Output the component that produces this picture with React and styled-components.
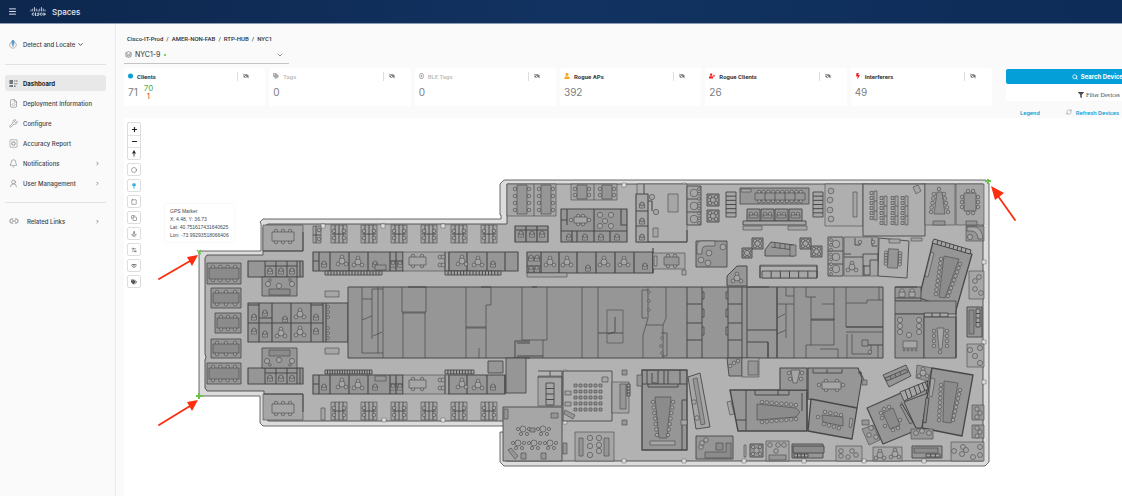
import React from "react";
import styled, { createGlobalStyle } from "styled-components";
import {
  Menu, ChevronDown, ChevronRight, FileCode, Wrench, Bell, UserRound, Link2,
  Search, RefreshCw, Layers, Plus, Minus, Circle, Square, Copy, Anchor, Settings2,
} from "lucide-react";
import { FaEyeSlash, FaTag, FaTags, FaUser, FaUserPlus, FaBolt, FaFilter, FaMapPin, FaWifi } from "react-icons/fa";

const Global = createGlobalStyle`
  *, *::before, *::after { box-sizing: border-box; }
  body { margin: 0; background: #fafafa; color: #3c4045; font-family: Inter, "Liberation Sans", sans-serif; font-size: 6px; overflow-x: hidden; }
  button, select { font: inherit; color: inherit; }
  svg { display: block; flex: none; }
`;

const Page = styled.div`
  display: flex;
  flex-direction: column;
  min-height: 100vh;
`;

const Header = styled.header`
  display: flex;
  align-items: center;
  height: 24px;
  padding: 0 8px;
  color: #e4eaf3;
  background: linear-gradient(90deg, #0d274d, #123261 50%, #0d2c57);
  border-bottom: 1px solid #8b9bb4;
`;

const MenuButton = styled.button`
  display: flex;
  padding: 0;
  border: 0;
  background: none;
`;

const Brand = styled.a`
  display: flex;
  align-items: center;
  gap: 6px;
  margin-left: 13px;
  color: inherit;
  font-size: 8px;
  font-weight: 500;
  line-height: 12px;
  text-decoration: none;
`;

const Body = styled.div`
  display: flex;
  flex: 1;
`;

const Sidebar = styled.aside`
  flex: none;
  width: 116px;
  padding: 12px 9px 0 5px;
  border-right: 1px solid #e9e9e9;
`;

const Product = styled.button`
  display: flex;
  align-items: center;
  gap: 2px;
  width: 100%;
  height: 16px;
  padding: 0 4px;
  border: 0;
  background: none;
  font-weight: 500;
  span { padding-left: 4px; }
`;

const Rule = styled.hr`
  margin: ${(p) => (p.$after ? "11px 0 10px" : "12px 0 10px")};
  border: 0;
  border-top: 1px solid #e2e2e2;
`;

const NavList = styled.nav`
  display: flex;
  flex-direction: column;
  gap: 4px;
`;

const NavItem = styled.a`
  display: flex;
  align-items: center;
  gap: ${(p) => (p.$wide ? "8px" : "5px")};
  height: 16px;
  padding: 0 6px 0 4px;
  border-radius: 3px;
  background: ${(p) => (p.$active ? "#e8e8e8" : "transparent")};
  color: ${(p) => (p.$active ? "#1c1e21" : "#3c4045")};
  font-weight: ${(p) => (p.$active ? 700 : 500)};
  white-space: nowrap;
  text-decoration: none;
  & > svg { color: #70767e; }
  & > span { flex: 1; }
`;

const Main = styled.main`
  display: flex;
  flex-direction: column;
  flex: 1;
  min-width: 0;
  padding: 10px 0 0 8px;
  overflow: hidden;
`;

const Crumbs = styled.nav`
  display: flex;
  gap: 3px;
  padding-left: 3px;
  font-family: Roboto, sans-serif;
  font-weight: 500;
  line-height: 10px;
  a { color: #2b2e33; text-decoration: none; }
`;

const Floor = styled.label`
  display: flex;
  align-items: center;
  gap: 3px;
  width: 165px;
  height: 18px;
  margin-top: 2px;
  padding: 0 5px 0 1px;
  border-bottom: 1px solid #c4c4c4;
  font-size: 7px;
  color: #555a60;
`;

const FloorSelect = styled.select`
  appearance: none;
  width: 26px;
  padding: 0;
  border: 0;
  outline: 0;
  background: none;
  color: #2b2e33;
`;

const Online = styled.i`
  width: 2px;
  height: 2px;
  margin-right: auto;
  border-radius: 50%;
  background: #5cb836;
`;

const Toolbar = styled.div`
  display: grid;
  grid-template-columns: minmax(0, 1fr) 186px;
  gap: 14px;
  height: 50px;
  margin: 4px -70px 0 0;
`;

const Cards = styled.div`
  display: grid;
  grid-template-columns: repeat(6, minmax(0, 1fr));
  gap: 4px;
  height: 38px;
`;

const Card = styled.section`
  padding: 2px 4px;
  border-radius: 2px;
  background: #fff;
`;

const CardHead = styled.div`
  display: flex;
  align-items: center;
  gap: 4px;
  height: 12px;
  padding-right: 12px;
  h2 {
    flex: 1;
    margin: 0;
    color: ${(p) => (p.$muted ? "#b8b8b8" : "#34383d")};
    font-family: Roboto, sans-serif;
    font-size: 6px;
    font-weight: ${(p) => (p.$muted ? 500 : 700)};
  }
  & > svg { width: auto; height: 6px; color: ${(p) => p.$color}; }
`;

const HideButton = styled.button`
  display: flex;
  align-items: center;
  height: 9px;
  padding: 0 0 0 5px;
  border: 0;
  border-left: 1px solid #dedede;
  background: none;
  color: #54585d;
`;

const Count = styled.div`
  display: flex;
  align-items: center;
  gap: 6px;
  height: 19px;
  color: #7b7e82;
  font-size: 10px;
`;

const Split = styled.div`
  display: flex;
  flex-direction: column;
  align-items: center;
  font-size: 8px;
  line-height: 8px;
  color: #4caf50;
  em { color: #d8401f; font-style: normal; }
`;

const Actions = styled.div`
  display: flex;
  flex-direction: column;
  padding-top: 1px;
`;

const SearchButton = styled.button`
  display: flex;
  align-items: center;
  justify-content: center;
  gap: 3px;
  height: 15px;
  padding: 0;
  border: 0;
  border-radius: 2px;
  background: #049fd9;
  color: #fff;
  font-weight: 700;
`;

const FilterButton = styled.button`
  display: flex;
  align-items: center;
  justify-content: center;
  gap: 2px;
  height: 17px;
  padding: 4px 0 0;
  border: 0;
  background: #fff;
  color: #44484c;
  font-family: "Liberation Serif", serif;
`;

const ActionLinks = styled.div`
  display: flex;
  align-items: center;
  gap: 26px;
  height: 17px;
  padding: 6px 0 0 14px;
  color: #049fd9;
  font-family: Roboto, sans-serif;
  font-weight: 500;
  a { display: flex; gap: 4px; color: inherit; text-decoration: none; }
  svg { color: #8d9196; }
`;

const MapPanel = styled.section`
  position: relative;
  flex: 1;
  background: #fff;
`;

const Plan = styled.svg`
  width: 100%;
  height: auto;
  stroke-linejoin: round;
`;

const Controls = styled.div`
  position: absolute;
  top: 4px;
  left: 3px;
  display: flex;
  flex-direction: column;
  gap: 3px;
`;

const ControlGroup = styled.div`
  display: flex;
  flex-direction: column;
  border: 1px solid #dddddd;
  border-radius: 2px;
  background: #fff;
`;

const Control = styled.button`
  display: flex;
  align-items: center;
  justify-content: center;
  width: 12px;
  height: ${(p) => (p.$zoom ? "12px" : "11px")};
  padding: 0;
  border: 0;
  background: none;
  color: ${(p) => (p.$active ? "#1ba4dc" : p.$zoom ? "#1f1f1f" : "#555555")};
  & + & { border-top: 1px solid #e2e2e2; }
`;

const GpsTip = styled.div`
  position: absolute;
  top: 86px;
  left: 41px;
  padding: 3px 5px;
  background: #fff;
  box-shadow: 0 0 2px rgba(0, 0, 0, 0.08);
  color: #45484c;
  font-family: "Liberation Sans", sans-serif;
  font-size: 5px;
  line-height: 8px;
  white-space: nowrap;
`;

/* Floor tones */
const ROOM = "#a6a6a6";
const DARK = "#969696";
const DESK = "#8b8b8b";
const LINE = "#484848";

const Box = ({ b, f = ROOM, w = 0.6 }) => (
  <rect x={b[0]} y={b[1]} width={b[2] - b[0]} height={b[3] - b[1]} fill={f} strokeWidth={w} />
);
const Poly = ({ p, f = ROOM, w = 0.6 }) => <polygon points={p} fill={f} strokeWidth={w} />;
const Lines = ({ d, w = 0.7 }) => <path d={d} fill="none" strokeWidth={w} />;
const Dots = ({ p, r = 1.8, f = ROOM }) =>
  p.map(([x, y], i) => <circle key={i} cx={x} cy={y} r={r} fill={f} />);

const between = (a, b, n) =>
  Array.from({ length: n }, (_, i) => {
    const t = n === 1 ? 0.5 : i / (n - 1);
    return [a[0] + (b[0] - a[0]) * t, a[1] + (b[1] - a[1]) * t];
  });

const WideTable = ({ x, y, w, h, n, f = ROOM }) => (
  <g>
    <Dots p={between([x + 4, y - 1], [x + w - 4, y - 1], n)} />
    <Dots p={between([x + 4, y + h + 1], [x + w - 4, y + h + 1], n)} />
    <Box b={[x, y, x + w, y + h]} f={f} />
  </g>
);
const TallTable = ({ x, y, w, h, n }) => (
  <g>
    <Dots p={between([x - 2, y + 4], [x - 2, y + h - 4], n)} />
    <Dots p={between([x + w + 2, y + 4], [x + w + 2, y + h - 4], n)} />
    <Box b={[x, y, x + w, y + h]} f={DARK} />
  </g>
);
const Pod = ({ x, y }) => (
  <g>
    <Box b={[x, y, x + 16, y + 18]} />
    <Lines w={0.9} d={`M${x + 8} ${y}v18M${x + 1} ${y + 9}h14M${x + 4} ${y}v18M${x + 12} ${y}v18`} />
    <Dots p={[[x + 3, y + 6], [x + 3, y + 13], [x + 13, y + 6], [x + 13, y + 13]]} />
  </g>
);
const Quad = ({ x, y, s = 12 }) => (
  <g>
    <Box b={[x, y, x + s, y + s]} f={DARK} w={0.9} />
    <Dots r={1.7} p={[[x + 3, y + 3], [x + s - 3, y + 3], [x + 3, y + s - 3], [x + s - 3, y + s - 3]]} />
    <circle cx={x + s / 2} cy={y + s / 2} r="2.6" fill={ROOM} />
  </g>
);
const Trio = ({ x, y }) => (
  <g>
    <Dots p={[[x, y - 4], [x - 4, y + 3], [x + 4, y + 3]]} r={1.9} />
    <circle cx={x} cy={y} r="3" fill={ROOM} />
  </g>
);
const Steps = ({ x, y, w, h, n, vertical }) => (
  <g>
    <Box b={[x, y, x + w, y + h]} w={0.9} />
    <Lines
      w={1}
      d={Array.from({ length: n - 1 }, (_, i) =>
        vertical ? `M${x} ${y + ((i + 1) * h) / n}h${w}` : `M${x + ((i + 1) * w) / n} ${y}v${h}`
      ).join("")}
    />
  </g>
);
const Seated = ({ x, y }) => (
  <g>
    <rect x={x - 2.5} y={y} width="5" height="4" fill={ROOM} />
    <circle cx={x} cy={y} r="2" fill={DARK} />
  </g>
);

const WestWing = () => (
  <g>
    {/* meeting tables on the west wall */}
    {[[207, 263, 241, 284, 4], [211, 288, 241, 308, 3], [215, 313, 241, 333, 3], [211, 339, 241, 358, 3], [207, 363, 241, 384, 4]].map(([a, b, c, d, n]) => (
      <g key={b}>
        <Box b={[a, b, c, d]} f={DARK} w={0.8} />
        <WideTable x={a + 2} y={b + 5} w={c - a - 4} h={d - b - 10} n={n} f={DESK} />
      </g>
    ))}
    {/* corner conference rooms */}
    <Box b={[263, 225, 303, 251]} />
    <WideTable x={272} y={232} w={22} h={9} n={3} />
    <Box b={[263, 394, 303, 420]} />
    <WideTable x={272} y={404} w={22} h={9} n={3} />
    <Lines w={1} d="M303 232v19M263 251h40M264 394h39v18" />
    {/* booth rows */}
    {[261, 368].map((y) => (
      <g key={y}>
        <Box b={[248, y, 303, y + 16]} f={DARK} w={1.1} />
        <Lines w={1} d={`M265 ${y}v16M276 ${y}v16M287 ${y}v16M297 ${y}v16M300 ${y}v16M265 ${y + 5}h32`} />
        {[270, 281, 292].map((x) => <Seated key={x} x={x} y={y + 9} />)}
      </g>
    ))}
    <Box b={[262, 277, 297, 296]} f={DARK} w={0.8} />
    <Box b={[269, 289, 290, 295]} f={DESK} />
    <Dots p={[[268, 284], [279, 286], [292, 284]]} r={2.6} />
    <Dots p={[[270, 280], [290, 280]]} r={1.3} />
    <Box b={[262, 348, 297, 368]} f={DARK} w={0.8} />
    <Box b={[269, 350, 290, 356]} f={DESK} />
    <Dots p={[[267, 361], [279, 360], [292, 361]]} r={2.6} />
    <Dots p={[[270, 365], [290, 365]]} r={1.3} />
    {/* offices beside the core */}
    <Box b={[248, 303, 348, 342]} f={DARK} w={1.1} />
    <Lines w={1.1} d="M248 323h75M259 303v39M272 303v39M291 303v39M311 303v39M323 303v39M326 303v39M248 305h11M259 318h13M311 305h12" />
    {[[254, 316], [265, 312], [316, 316], [254, 330], [265, 333], [316, 330], [285, 318]].map(([x, y]) => <Seated key={`${x}-${y}`} x={x} y={y} />)}
    <Trio x={281} y={333} />
    <Trio x={300} y={314} />
    <Trio x={300} y={332} />
    <Dots p={[[328, 307], [328, 312], [328, 317], [328, 328], [328, 333], [328, 338]]} r={1.5} />
    <Box b={[325, 291, 339, 297]} />
    <Box b={[325, 348, 339, 354]} />
  </g>
);

const OfficeRow = ({ y, flip }) => {
  const t = flip ? y + 5 : y;
  const s = flip ? y : y + 19;
  return (
    <g>
      <Box b={[313, t, 403, t + 19]} f={DARK} w={1.1} />
      <Box b={[403, t, 449, t + 19]} />
      <Box b={[449, t, 518 - (flip ? 13 : 0), t + 19]} f={DARK} w={1.1} />
      <Lines w={1.1} d={`M319 ${t}v19M330 ${t}v19M349 ${t}v19M368 ${t}v19M390 ${t}v19M396 ${t}v19M445 ${t}v19M467 ${t}v19M487 ${t}v19M505 ${t}v19M313 ${t + 9}h6M390 ${t + 9}h13`} />
      <Steps x={325} y={s} w={flip ? 47 : 57} h={4} n={19} />
      <Steps x={445} y={s} w={flip ? 29 : 56} h={4} n={flip ? 10 : 18} />
      <WideTable x={409} y={t + 5} w={17} h={8} n={2} />
      {[324, 375, 393, 400, 493].map((x) => <Seated key={x} x={x} y={t + 11} />)}
      <Trio x={342} y={t + 9} />
      <Trio x={358} y={t + 10} />
      <Trio x={462} y={t + 9} />
      <Trio x={478} y={t + 10} />
      <Dots p={[[440, t + 5], [440, t + 13], [443, t + 5], [443, t + 13]]} r={2} />
      <Box b={[375, flip ? t + 1 : t + 13, 386, flip ? t + 6 : t + 18]} f={DARK} />
    </g>
  );
};

const Core = () => (
  <g>
    <Box b={[348, 287, 883, 358]} f={DARK} w={1} />
    <Lines d="M362 287v12h10v-10h11M362 299v54h21M372 299v40M378 287v66M383 287v71M362 320l10-4M373 336l9-4M402 287v25h24v-25M402 313h24M403 313v45M425 313v45M466 287v71M486 358v-53h5v-18M466 327h20M466 328h20M479 348v10M522 287v53h21v18M543 340h4v-53M582 287v71M598 287v71" />
    <Lines w={1} d="M515 341h15M515 341v17h15M517 343h13M517 356h26M491 287h-10M408 287h18M532 287h5" />
    <Lines d="M648 287v31l-2 7-3 10v23M666 287v31l-3 7v33M646 325h17M642 290h6M642 290v28h5M661 333h6v23h-5" />
    <Box b={[607, 310, 623, 343]} f={DARK} />
    <Lines w={0.9} d="M598 333h25M615 317v15l-7 2" />
    <Dots p={[[649, 292], [649, 301], [649, 310], [662, 338], [661, 346], [662, 353]]} r={1.3} />
    <Lines w={1} d="M687 287v71M702 287v71M687 304h15M687 323h15M687 340h15M728 287v71M742 287v71M728 304h14M728 323h14M728 340h14M747 287v71M747 330h30M747 342h21v16M768 342v16M747 287h22" />
    <Lines w={0.8} d="M702 292h2v7h-2M702 309h2v8h-2M702 327h2v8h-2M728 292h-2v7h2M728 309h-2v8h2M728 327h-2v8h2" />
    <Lines w={1.4} d="M777 287v71" />
    <Lines d="M777 304h17M786 304v34M777 318l8-4M777 334l9-4M794 287v71M786 287v9h8M806 287v10h10M811 297v22M811 319h24M811 345v-26M834 287v58M822 304h12M820 349h18v9M806 345v13M806 345h28M846 287v40h37M846 332h37M847 334v24M852 334v20h19v-9M862 340h6v6h-6zM878 345v13M862 303h5v-3h16M879 287v13M846 303h16" />
    <Lines w={1} d="M846 327h37M868 345h15M811 320h23" />
    <Dots p={[[870, 352]]} />
    {/* rooms hanging off the core */}
    <Box b={[506, 358, 526, 393]} f={DARK} w={0.9} />
    <Box b={[488, 361, 503, 373]} f={DARK} w={0.9} />
    <Poly p="727,358 742,358 742,376 729,376" f={DARK} w={0.9} />
    <Box b={[742, 358, 759, 377]} />
    <Box b={[748, 361, 758, 375]} f={DARK} />
    <Dots p={[[734, 363], [730, 366], [738, 361]]} />
    <Poly p="727,286 727,276 737,266 747,266 747,286" f={DARK} w={1} />
    <Trio x={737} y={278} />
  </g>
);

const NorthEast = () => (
  <g>
    <Box b={[507, 184, 556, 216]} />
    <Lines d="M534 184v32" />
    <TallTable x={517} y={185} w={10} h={29} n={4} />
    <TallTable x={541} y={185} w={10} h={29} n={4} />
    <Box b={[571, 184, 617, 200]} />
    <Lines d="M594 184v16" />
    <TallTable x={577} y={185} w={10} h={14} n={2} />
    <TallTable x={602} y={185} w={10} h={14} n={2} />
    <Box b={[515, 226, 548, 242]} f={DARK} w={1.2} />
    <Lines w={1.2} d="M526 226v16M537 226v16M516 230h31" />
    {[521, 532, 542].map((x) => <Seated key={x} x={x} y={233} />)}
    <Box b={[561, 209, 627, 242]} f={DARK} w={1.1} />
    <Lines w={1.1} d="M561 231h66M572 231v11M577 231v11M594 209v33M610 231v11M567 209v16M561 220h6M621 209v16h6" />
    <WideTable x={574} y={217} w={13} h={6} n={2} />
    <Dots p={[[571, 220], [589, 220]]} />
    <Dots p={[[600, 215], [611, 215], [605, 221], [600, 226], [611, 226]]} r={2.6} />
    {[569, 585, 601, 617].map((x) => <Seated key={x} x={x} y={236} />)}
    <Box b={[637, 184, 687, 242]} f="#b0b0b0" />
    <Lines w={1} d="M648 242h39v-12M644 184v10" />
    <Box b={[636, 194, 648, 242]} w={1.1} />
    <Lines w={1.1} d="M636 211h12M636 226h12M648 201h4v10" />
    {[204, 220, 236].map((y) => <Seated key={y} x={642} y={y} />)}
    <Box b={[668, 194, 678, 212]} />
    <Box b={[653, 228, 658, 237]} />
    <Dots p={[[652, 197], [656, 212]]} r={2.7} />
    <Box b={[687, 186, 701, 225]} w={0.9} />
    <Lines w={0.9} d="M687 199h14M687 212h14" />
    <Dots p={[[694, 193], [694, 206], [694, 219]]} r={3.8} />
    <Dots p={between([699, 189], [699, 223], 8)} r={1.5} />
    <Quad x={707} y={194} />
    <Quad x={707} y={210} />
    <Steps x={726} y={192} w={10} h={25} n={6} vertical />
    <Steps x={813} y={192} w={10} h={25} n={6} vertical />
    <Box b={[740, 188, 809, 204]} f={DARK} w={0.8} />
    <Box b={[741, 189, 751, 192]} />
    <WideTable x={755} y={193} w={50} h={7} n={10} f={DARK} />
    <Lines d="M765 193v7M775 193v7M785 193v7M795 193v7" />
    {[747, 761, 775, 789].map((x) => (
      <g key={x}>
        <Box b={[x, 209, x + 13, 221]} f={DARK} w={0.9} />
        <Dots p={[[x + 4, 214], [x + 9, 214]]} />
        <Box b={[x + 2, 215, x + 11, 218]} f={DARK} />
      </g>
    ))}
    <Box b={[743, 221, 806, 225]} w={0.9} />
    <Box b={[743, 226, 762, 230]} />
    <Box b={[788, 226, 807, 230]} />
    <Box b={[696, 241, 727, 267]} f={DARK} w={0.9} />
    <path d="M697 254v-8q0-5 5-5h13v5h-9q-4 0-4 4v4z" fill={ROOM} />
    <Dots p={[[709, 253], [701, 260], [708, 263], [723, 247]]} r={2.9} />
    <Quad x={752} y={238} s={11} />
    <Quad x={742} y={248} s={10} />
    <Quad x={800} y={238} s={11} />
    <Quad x={811} y={246} s={11} />
    <Poly p="765,250 771,242 794,245 794,256 765,256" f={DARK} w={0.9} />
    <Lines d="M771 247l23 3M775 243v5M780 244v5M785 244v5M790 245v5" />
    <Box b={[790, 245, 796, 256]} f={DARK} />
    <Box b={[760, 265, 817, 278]} w={0.5} f="#b0b0b0" />
    <Steps x={762} y={271} w={55} h={7} n={6} />
    <Lines w={1.2} d="M760 278v-12h57v12" />
    {/* offices north of the core */}
    <Box b={[527, 252, 653, 273]} f={DARK} w={1.1} />
    <Lines w={1.2} d="M541 252v21M559 252v21M577 252v21M596 252v21M615 252v21M634 252v21M653 248v25M527 266h14" />
    <Box b={[527, 273, 567, 277]} />
    <Trio x={550} y={262} />
    <Trio x={567} y={262} />
    <Trio x={604} y={262} />
    <Trio x={624} y={262} />
    {[[531, 257], [537, 257], [531, 268], [537, 268], [588, 267], [645, 265]].map(([x, y]) => <Seated key={`${x}-${y}`} x={x} y={y} />)}
    <Box b={[653, 253, 685, 269]} />
    <WideTable x={664} y={257} w={15} h={8} n={2} f={DARK} />
    <Box b={[654, 256, 657, 266]} />
    <Box b={[682, 270, 686, 275]} />
    {/* open rooms along the north wall */}
    <Box b={[825, 184, 863, 226]} f="#afafaf" />
    <Dots p={[[831, 191], [830, 200], [830, 210], [831, 219]]} r={2.9} />
    <Box b={[853, 192, 857, 217]} />
    <Poly p="863,184 925,184 925,236 863,236" f="#afafaf" w={0.9} />
    {[[874, 191, 220], [884, 196, 225], [895, 196, 225], [905, 196, 225]].map(([x, a, b]) => (
      <g key={x}>
        <Box b={[x, a, x + 3, b]} />
        <Lines d={`M${x} ${a + 10}h3M${x} ${a + 20}h3`} />
        {between([x - 3, a + 2], [x - 3, b - 2], 6).map(([cx, cy], i) => <rect key={i} x={cx - 1} y={cy - 1.5} width="3" height="3" fill={ROOM} />)}
      </g>
    ))}
    <Poly p="913,187 918,185 921,191 916,194" />
    <Box b={[925, 184, 955, 225]} />
    <Poly p="937,192 942,192 945,214 934,214" f={DARK} />
    <Dots p={[...between([934, 194], [931, 212], 5), ...between([944, 194], [948, 212], 5), [939, 189]]} />
    <Box b={[956, 184, 984, 225]} />
    <TallTable x={964} y={193} w={12} h={18} n={3} />
    <Dots p={[[968, 191], [973, 191], [968, 213], [973, 213]]} />
    <Box b={[933, 221, 945, 225]} f={DARK} />
    <Box b={[966, 221, 977, 225]} f={DARK} />
    <Box b={[966, 226, 984, 241]} f={DARK} />
    <path d="M967 227h9q6 2 7 12h-5q0-7-6-8h-5z" fill={ROOM} />
    <Dots p={[[970, 237]]} r={2.6} />
    <Box b={[828, 237, 843, 276]} w={0.9} />
    <Lines w={0.9} d="M828 251h15M828 264h15" />
    <Dots p={[[836, 244], [836, 257], [836, 269]]} r={3.8} />
    <Dots p={between([831, 240], [831, 274], 8)} r={1.5} />
    <Box b={[844, 237, 878, 276]} />
    <Lines w={0.9} d="M844 257h19v19M844 254h7M863 257v-3h15v6M863 266h7v-6h8M855 238v7h5v-4M872 238v8h5M864 265v10h6v-9" />
    <Trio x={852} y={267} />
    <Dots p={[[860, 242], [873, 242]]} />
    <Poly p="879,238 909,241 907,278 878,276" f="#afafaf" w={0.9} />
    <g transform="rotate(3 893 258)"><TallTable x={888} y={249} w={10} h={19} n={5} /></g>
    <Box b={[889, 239, 900, 243]} />
    <Box b={[911, 238, 922, 241]} />
    <Poly p="933,242 972,254 956,310 919,298" f={DARK} w={1.3} />
    <Poly p="934,239 971,250 970,254 932,243" w={1} />
    <Lines w={1} d="M938 240l-1 4M942 241l-1 4M946 243l-1 4M950 244l-1 4M954 245l-1 4M958 246l-1 4M962 247l-1 4M966 249l-1 4" />
    <Poly p="944,256 959,259 945,298 939,297" f={DESK} />
    <Dots p={[...between([941, 259], [936, 294], 9), ...between([960, 264], [948, 296], 9)]} />
    <Poly p="931,252 934,253 928,277 925,276" />
    <Box b={[969, 271, 984, 299]} />
    <Dots p={[[979, 277], [975, 281], [981, 293], [975, 289]]} r={2.4} />
    <Box b={[967, 307, 982, 337]} f={DARK} w={0.9} />
    <Box b={[969, 310, 974, 334]} f={DESK} />
    <Steps x={976} y={309} w={4} h={18} n={4} vertical />
    {/* rooms east of the core */}
    <Box b={[895, 287, 921, 301]} f={DARK} w={0.9} />
    <Lines w={1.1} d="M895 298h26M895 287h22" />
    <Dots p={[[902, 291], [912, 291]]} r={2.2} />
    <Box b={[899, 292, 905, 297]} />
    <Box b={[909, 292, 915, 297]} />
    <Box b={[895, 301, 956, 314]} f={DARK} w={0.8} />
    <Steps x={924} y={313} w={24} h={4} n={3} />
    <Box b={[895, 314, 924, 358]} f={DARK} w={0.9} />
    <Box b={[924, 317, 956, 358]} f={DARK} w={0.9} />
    <Dots p={[[900, 320], [900, 326], [900, 332], [919, 320], [919, 326], [919, 332], [909, 335]]} r={2.6} />
    <Box b={[903, 341, 917, 348]} />
    <Dots p={[[904, 350], [908, 350], [912, 350], [916, 350]]} r={1} />
    <Poly p="937,328 944,328 942,349 939,349" f={ROOM} />
    <Dots p={[...between([934, 331], [934, 346], 4), ...between([947, 331], [947, 346], 4), [940, 352]]} />
    <Lines w={1.2} d="M956 310v48" />
  </g>
);

const SouthEast = () => (
  <g>
    <Box b={[538, 376, 562, 406]} />
    <Lines w={0.9} d="M538 371h24v35M550 371v5M538 377h24" />
    <Steps x={546} y={383} w={8} h={22} n={4} vertical />
    <Box b={[563, 371, 612, 421]} w={0.9} f="#b0b0b0" />
    {Array.from({ length: 30 }, (_, i) => (
      <rect key={i} x={574 + (i % 6) * 5} y={384 + Math.floor(i / 6) * 6} width="3" height="3" fill={DARK} />
    ))}
    <Box b={[565, 391, 571, 395]} />
    <Box b={[565, 402, 571, 406]} />
    <Box b={[602, 377, 608, 382]} />
    <Poly p="565,410 575,415 573,419 564,414" f={DARK} />
    <Box b={[612, 382, 629, 413]} />
    <Box b={[620, 384, 626, 409]} f={DARK} />
    <Steps x={627} y={384} w={3} h={12} n={4} vertical />
    <Box b={[622, 370, 627, 375]} f={DARK} />
    <Box b={[622, 420, 627, 425]} f={DARK} />
    <Box b={[503, 407, 562, 461]} w={0.9} />
    <Box b={[504, 409, 508, 419]} f={DARK} />
    <Box b={[551, 413, 558, 418]} f={DARK} />
    {[[523, 429], [543, 429], [518, 443], [534, 443], [550, 443]].map(([x, y]) => (
      <g key={`${x}-${y}`}>
        <Dots p={[[x - 5, y], [x + 6, y], [x - 2, y + 5], [x + 4, y + 5]]} r={1.6} />
        <circle cx={x} cy={y} r="3" fill={ROOM} />
      </g>
    ))}
    <Poly p="508,450 511,448 518,456 515,459" f={DARK} />
    <Box b={[521, 453, 526, 459]} f={DARK} />
    <Box b={[541, 453, 546, 459]} f={DARK} />
    <Box b={[530, 428, 535, 432]} f={DARK} />
    <Box b={[575, 432, 614, 461]} />
    <Box b={[579, 438, 583, 456]} f={DARK} />
    <Box b={[604, 438, 609, 456]} f={DARK} />
    <Dots p={[[590, 438], [599, 438], [599, 445], [599, 451], [590, 455], [590, 446]]} r={2.7} />
    <Box b={[563, 443, 567, 454]} f={DARK} />
    <Box b={[642, 370, 687, 450]} f={DARK} w={1.4} />
    <Lines w={1} d="M642 384h45M648 384v3h30v-3M658 371v13M664 371v13M668 371v13M657 383h-5v-10M682 400h5M682 400v20M682 425v25M647 370v14M680 370v14" />
    <Poly p="655,397 671,397 667,438 659,438" f={DESK} />
    <Dots p={[...between([653, 402], [657, 435], 7), ...between([673, 402], [668, 435], 7)]} />
    <Box b={[650, 441, 675, 445]} />
    <Box b={[681, 420, 687, 425]} />
    <Box b={[637, 375, 642, 386]} f={DARK} />
    <Poly p="688,377 700,373 710,427 696,429" w={0.9} />
    <Poly p="693,379 697,378 705,424 701,425" f={DARK} />
    <Dots p={[[694, 402], [697, 418]]} r={2.3} />
    <Box b={[696, 436, 733, 459]} f={DARK} w={0.9} />
    <Poly p="705,452 726,452 726,443 731,443 731,458 705,458" f={DESK} />
    <Box b={[716, 443, 723, 450]} f={DESK} />
    <Dots p={[[701, 447], [706, 440], [702, 443]]} r={2.3} />
    <Box b={[744, 445, 746, 457]} />
    <Quad x={750} y={444} s={13} />
    <Box b={[766, 441, 789, 461]} />
    <Box b={[769, 455, 786, 460]} f={DARK} />
    <Dots p={[[770, 445], [784, 445], [776, 451], [778, 445]]} r={2.3} />
    <Poly p="730,390 807,390 807,431 738,431" f={DARK} w={1.4} />
    <Lines w={1} d="M746 390v41M736 420h10M755 390v5h34v-5M778 390v5M802 393v18M807 392v38" />
    <Poly p="757,404 796,408 800,412 796,417 757,420" f={DESK} />
    <Dots p={[...between([762, 402], [796, 405], 8), ...between([762, 422], [796, 419], 8)]} />
    <Poly p="727,402 731,401 734,414 730,415" />
    <Box b={[780, 368, 807, 390]} f={DARK} w={1.1} />
    <Poly p="791,370 800,370 797,383 793,383" f={ROOM} />
    <Dots p={[[789, 373], [790, 379], [802, 373], [801, 379]]} />
    <Poly p="808,368 858,368 862,378 857,408 808,399" f={DARK} w={1.1} />
    <Lines w={0.9} d="M813 369v4h29v-4M827 369v4M860 371l4 9M858 373h4" />
    <WideTable x={822} y={382} w={19} h={7} n={2} />
    <Dots p={[[819, 385], [843, 385]]} />
    <Poly p="811,399 857,408 852,439 808,431" f={DARK} w={1.3} />
    <Poly p="822,415 843,417 843,426 823,422" f={DESK} />
    <Dots p={[...between([825, 412], [841, 415], 4), ...between([824, 424], [839, 428], 4), [818, 417]]} />
    <Box b={[862, 380, 867, 385]} f={DARK} />
    <Poly p="850,418 853,419 851,428 849,427" />
    <Poly p="883,375 906,365 911,376 889,387" f={DARK} w={0.9} />
    <Poly p="885,378 906,369 908,372 887,381" f={DESK} w={0.8} />
    <Lines d="M890 376l1 3M895 374l1 3M900 372l1 3" />
    <Poly p="917,365 932,368 928,381 916,378" f={DARK} />
    <Trio x={923} y={373} />
    <Poly p="867,408 928,381 922,428 883,444" f={DARK} w={1.2} />
    <Poly p="900,392 925,382 928,389 904,401" w={0.9} />
    <Lines w={1} d="M905 390l3 9M909 388l3 9M914 386l3 9M918 384l3 9M922 383l3 8" />
    <Poly p="904,402 928,393 922,428 916,428" f={DARK} w={1} />
    <Lines w={0.8} d="M901 402l15 26M900 405l2-1 11 18-3 2z" />
    <Poly p="883,413 893,408 900,425 890,429" f={DESK} />
    <Dots p={[[884, 409], [889, 407], [881, 413], [882, 418], [885, 426], [893, 430], [898, 428], [900, 420]]} />
    <Poly p="932,368 973,375 962,436 922,428" f={DARK} w={1.4} />
    <Poly p="944,381 958,383 951,423 943,422" f={DESK} />
    <Dots p={[...between([941, 385], [939, 420], 9), ...between([960, 390], [953, 420], 8)]} />
    <Poly p="931,378 935,379 932,397 929,396" />
    <Poly p="926,398 929,398 926,423 923,422" f={DESK} w={0.9} />
    <Box b={[862, 420, 869, 425]} f={DARK} />
    <Poly p="862,429 873,425 880,440 869,445" f={DARK} />
    <Dots p={[[871, 428], [869, 435], [876, 437]]} r={2.3} />
    <Box b={[911, 429, 933, 439]} f={DARK} />
    <Dots p={[[916, 433], [929, 433], [922, 431]]} r={2.4} />
    <Box b={[792, 444, 823, 458]} f={DARK} w={0.9} />
    <Box b={[793, 446, 824, 453]} f={DESK} w={0.9} />
    <Steps x={794} y={454} w={14} h={3} n={4} />
    <Box b={[836, 446, 862, 461]} />
    <Dots p={[[841, 451], [841, 456], [848, 457], [856, 455], [852, 451]]} r={2.3} />
    <Box b={[873, 447, 902, 461]} />
    <Trio x={880} y={455} />
    <Trio x={895} y={454} />
    <Box b={[912, 446, 942, 458]} f={DARK} w={0.9} />
    <Box b={[914, 448, 938, 453]} f={DESK} />
    <Steps x={926} y={454} w={14} h={3} n={3} />
    <Box b={[951, 442, 984, 461]} />
    <Dots p={[[954, 451], [963, 447], [962, 454], [966, 450], [980, 447], [980, 455], [973, 457]]} r={2.5} />
    <Box b={[967, 344, 984, 367]} />
    <Dots p={[[970, 350], [975, 356], [980, 348], [980, 363]]} r={2.6} />
    <Box b={[972, 405, 984, 420]} f={DARK} />
    <Dots p={[[980, 413], [977, 409], [977, 417]]} r={2.2} />
    <Box b={[972, 425, 984, 438]} f={DARK} />
    <Dots p={[[980, 432], [977, 428], [977, 436]]} r={2.2} />
  </g>
);

const FloorPlan = () => (
  <Plan viewBox="124 118 998 378" role="img" aria-label="Floor plan of NYC1-9">
    <g stroke={LINE} strokeWidth="0.6">
      <path
        fill="#dcdcdc" strokeWidth="0.8"
        d="M199 251h62v-27l-1-2 3-3h238v-4h-1v-31l4-4h482l3 3v279l-4 4H504l-4-4v-30h5v-6H263l-3-3v-27h-61z"
      />
      <path
        fill="#b2b2b2" strokeWidth="0.9"
        d="M207 255h56v-28l5-3h239v-40h476v277H506v-28h2v-12H268l-4-5v-25h-57l-2-3v-28l1-3-1-3v-96z"
      />
      <g fill="#dedede" strokeWidth="0.4">
        {[[321, 224], [381, 224], [441, 224], [382, 418], [441, 418], [622, 183], [682, 183], [682, 218], [862, 184], [862, 219], [922, 184], [922, 219], [563, 370], [563, 420], [622, 459], [682, 459], [742, 459], [802, 459], [862, 459], [922, 459], [982, 260], [982, 340], [982, 380]].map(([x, y]) => (
          <rect key={`${x}-${y}`} x={x} y={y} width="4" height="4" />
        ))}
      </g>
      <WestWing />
      <Box b={[313, 226, 321, 243]} />
      <Dots p={[[319, 230], [319, 239]]} />
      <Lines w={0.9} d="M316 226v17M313 235h8" />
      {[331, 361, 391, 421, 451, 481].map((x) => (
        <g key={x}><Pod x={x} y={225} /><Pod x={x} y={402} /></g>
      ))}
      <Box b={[321, 408, 325, 420]} />
      <Core />
      <OfficeRow y={252} />
      <OfficeRow y={370} flip />
      <NorthEast />
      <SouthEast />
    </g>
    <g fill="none" stroke="#6cc24a" strokeWidth="1.2">
      <path d="M197 250l4 4M198 253l3-3" />
      <path d="M199 393v6M196 396h7" strokeWidth="2" />
      <path d="M985 181h6M988 179v5" strokeWidth="2" />
    </g>
    <g stroke="#fb2e10" fill="#fb2e10" strokeWidth="1.8" strokeLinecap="round">
      <path d="M159 279l31-18M159 425l31-19M1015 220l-17-24" />
      <path stroke="none" d="M198 255l-6 11-5-9zM198 400l-6 11-5-9zM991 186l13 7-9 7z" />
    </g>
  </Plan>
);

const DashboardIcon = ({ size }) => (
  <svg width={size} height={size} viewBox="0 0 18 18" fill="currentColor">
    <path d="M1 2h7v8H1zM1 12h7v4H1z" />
    <path d="M10 2h3v4h-3zM14 2h3v4h-3zM10 8h7v3h-7z" opacity="0.55" />
    <path d="M10 13h3v3h-3z" />
  </svg>
);

const AccuracyIcon = ({ size }) => (
  <svg width={size} height={size} viewBox="0 0 18 18" fill="none" stroke="currentColor">
    <rect x="2" y="1.5" width="14" height="15" rx="1" />
    <circle cx="9" cy="9" r="3.5" strokeWidth="1.6" />
  </svg>
);

const NAV = [
  ["Dashboard", DashboardIcon, { active: true }],
  ["Deployment Information", FileCode, {}],
  ["Configure", Wrench, {}],
  ["Accuracy Report", AccuracyIcon, {}],
  ["Notifications", Bell, { more: true }],
  ["User Management", UserRound, { more: true }],
];

const TagOutline = () => (
  <svg viewBox="0 0 6 7" fill="none" stroke="currentColor">
    <rect x="1" y="0.5" width="4" height="6" rx="1.5" />
    <path d="M3 2v3" />
  </svg>
);
const Dot = () => <svg viewBox="0 0 5 6"><circle cx="2.5" cy="3" r="2.5" fill="currentColor" /></svg>;

const CARDS = [
  { name: "Clients", count: 71, icon: Dot, color: "#049fd9" },
  { name: "Tags", count: 0, icon: FaTag, color: "#a9a9a9", muted: true },
  { name: "BLE Tags", count: 0, icon: TagOutline, color: "#9d9d9d", muted: true },
  { name: "Rogue APs", count: 392, icon: FaUser, color: "#f9a51a" },
  { name: "Rogue Clients", count: 26, icon: FaUserPlus, color: "#ee1c1c" },
  { name: "Interferers", count: 49, icon: FaBolt, color: "#ee1c1c" },
];

const TOOLS = [
  ["Circle region", Circle], ["GPS markers", FaMapPin, true], ["Square region", Square], ["Copy", Copy],
  ["Anchor", Anchor], ["Settings", Settings2], ["Access points", FaWifi], ["Tags", FaTags],
];

const CiscoMark = () => (
  <svg width="16" height="9" viewBox="0 0 32 18" stroke="currentColor" strokeLinecap="round" fill="none">
    <path strokeWidth="1.5" d="M2 6v2M5.5 4v4M9 1v7M12.5 4v4M16 6v2M19.5 4v4M23 1v7M26.5 4v4M30 6v2" />
    <path strokeWidth="1.8" d="M8 12.5a2.3 2.3 0 1 0 0 3.6M11 12v5M18 12.3h-2.5q-1.5 1 0 2h1.5q1.5 1.4 0 2.4h-3M24 12.5a2.3 2.3 0 1 0 0 3.6" />
    <circle cx="28" cy="14.3" r="2.2" strokeWidth="1.6" />
  </svg>
);

const LocateIcon = () => (
  <svg width="8" height="10" viewBox="0 0 16 20" fill="none" stroke="#8a9097" strokeWidth="1.3">
    <path d="M5 6a6.5 6.5 0 1 0 6 0" />
    <path d="M8 15s-2.5-7-2.5-10a2.5 2.5 0 0 1 5 0c0 3-2.5 10-2.5 10z" fill="#4b9bd8" stroke="#6a8fae" />
  </svg>
);

const NorthArrow = () => (
  <svg width="6" height="8" viewBox="0 0 6 8">
    <path d="M3 0l2 3.5H1z" fill="#222" />
    <path d="M2 3.5h2L3 8z" fill="#777" />
  </svg>
);

export default function App() {
  return (
    <Page>
      <Global />
      <Header>
        <MenuButton aria-label="Menu"><Menu size={9} strokeWidth={2.5} /></MenuButton>
        <Brand href="#"><CiscoMark />Spaces</Brand>
      </Header>
      <Body>
        <Sidebar>
          <Product><LocateIcon /><span>Detect and Locate</span><ChevronDown size={7} strokeWidth={3} /></Product>
          <Rule />
          <NavList>
            {NAV.map(([name, Icon, { active, more }]) => (
              <NavItem key={name} href="#" $active={active}>
                <Icon size={9} strokeWidth={1.5} />
                <span>{name}</span>
                {more && <ChevronRight size={5} strokeWidth={4} />}
              </NavItem>
            ))}
          </NavList>
          <Rule $after />
          <NavItem href="#" $wide>
            <Link2 size={10} strokeWidth={2} />
            <span>Related Links</span>
            <ChevronRight size={5} strokeWidth={4} />
          </NavItem>
        </Sidebar>
        <Main>
          <Crumbs aria-label="Breadcrumb">
            <a href="#">Cisco-IT-Prod</a>/<a href="#">AMER-NON-FAB</a>/<a href="#">RTP-HUB</a>/<a href="#">NYC1</a>
          </Crumbs>
          <Floor>
            <Layers size={7} />
            <FloorSelect aria-label="Floor"><option>NYC1-9</option></FloorSelect>
            <Online />
            <ChevronDown size={8} />
          </Floor>
          <Toolbar>
            <Cards>
              {CARDS.map(({ name, count, icon: Icon, color, muted }) => (
                <Card key={name}>
                  <CardHead $muted={muted} $color={color}>
                    <Icon />
                    <h2>{name}</h2>
                    <HideButton aria-label={`Hide ${name}`}><FaEyeSlash size={6} /></HideButton>
                  </CardHead>
                  <Count>
                    {count}
                    {name === "Clients" && <Split>70<em>1</em></Split>}
                  </Count>
                </Card>
              ))}
            </Cards>
            <Actions>
              <SearchButton><Search size={6} strokeWidth={3} />Search Devices</SearchButton>
              <FilterButton><FaFilter size={6} />Filter Devices</FilterButton>
              <ActionLinks>
                <a href="#">Legend</a>
                <a href="#"><RefreshCw size={6} />Refresh Devices</a>
              </ActionLinks>
            </Actions>
          </Toolbar>
          <MapPanel>
            <FloorPlan />
            <Controls>
              <ControlGroup>
                <Control $zoom aria-label="Zoom in"><Plus size={7} strokeWidth={4} /></Control>
                <Control $zoom aria-label="Zoom out"><Minus size={7} strokeWidth={4} /></Control>
                <Control $zoom aria-label="Reset north"><NorthArrow /></Control>
              </ControlGroup>
              {TOOLS.map(([name, Icon, active]) => (
                <ControlGroup key={name}>
                  <Control aria-label={name} $active={active}><Icon size={6} /></Control>
                </ControlGroup>
              ))}
            </Controls>
            <GpsTip>
              <div>GPS Marker</div>
              <div>X: 4.48, Y: 36.73</div>
              <div>Lat: 40.751617431640625</div>
              <div>Lon: -73.99293518066406</div>
            </GpsTip>
          </MapPanel>
        </Main>
      </Body>
    </Page>
  );
}
